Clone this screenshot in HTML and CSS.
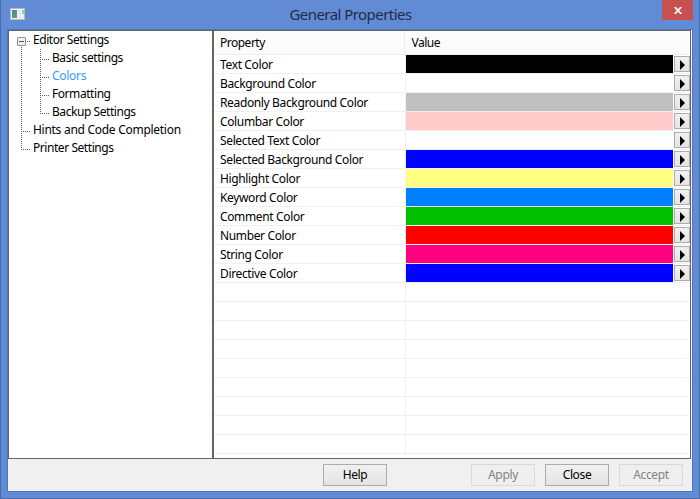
FILE: index.html
```html
<!DOCTYPE html>
<html lang="en">
<head>
<meta charset="utf-8">
<title>General Properties</title>
<link rel="stylesheet" href="styles.css">
</head>
<body>
<div class="window">
  <header class="titlebar">
    <svg class="app-icon" width="16" height="14" viewBox="0 0 16 14">
      <defs><linearGradient id="g" x1="0" y1="0" x2="1" y2="1"><stop offset="0" stop-color="#4a7fa8"/><stop offset="1" stop-color="#4bae78"/></linearGradient></defs>
      <rect x=".5" y=".5" width="14" height="11" fill="#f4f4f4" stroke="#b9b9b9"/>
      <rect x="2" y="2" width="5" height="8" fill="url(#g)"/>
      <rect x="8" y="2" width="3" height="8" fill="#e4e6e7"/>
      <rect x="12" y="2" width="2" height="4" fill="#8fc9b0"/>
      <rect x="12" y="6" width="2" height="4" fill="#e9eeee"/>
    </svg>
    <h1 class="title">General Properties</h1>
    <button class="close" aria-label="Close window"><svg width="8" height="7" viewBox="0 0 8 7"><path d="M.7 0L7.3 7M7.3 0L.7 7" stroke="#fff" stroke-width="1.8"/></svg></button>
  </header>
  <main class="client">
    <div class="panes">
      <nav class="tree">
        <svg class="tree-lines" width="60" height="130" viewBox="0 0 60 130">
          <g stroke="#606060" stroke-dasharray="1 1" fill="none">
            <path d="M12.5 16V119M31.5 18V83M18 10.5H22M14 100.5H22M14 118.5H22M33 28.5H41M33 46.5H41M33 64.5H41M33 82.5H41"/>
          </g>
          <rect x="8.5" y="6.5" width="8" height="8" rx=".5" fill="#f2f2f2" stroke="#919191"/>
          <path d="M10 10.5H15" stroke="#3f5497"/>
        </svg>
        <div class="node">Editor Settings</div>
        <div class="node child">Basic settings</div>
        <div class="node child selected">Colors</div>
        <div class="node child">Formatting</div>
        <div class="node child">Backup Settings</div>
        <div class="node wide">Hints and Code Completion</div>
        <div class="node">Printer Settings</div>
      </nav>
      <section class="grid">
        <div class="head"><div class="head-name">Property</div><div class="head-value">Value</div></div>
        <div class="rows" id="rows"></div>
      </section>
    </div>
    <footer class="footer">
      <button class="btn help">Help</button>
      <button class="btn" disabled>Apply</button>
      <button class="btn">Close</button>
      <button class="btn" disabled>Accept</button>
    </footer>
  </main>
</div>
<script src="script.js"></script>
</body>
</html>
```
FILE: styles.css
```css
* { box-sizing: border-box; }
body { margin: 0; font: 12px/18px "Noto Sans", "Open Sans", sans-serif; color: #000; letter-spacing: -0.36px; }
button { font: inherit; letter-spacing: inherit; margin: 0; padding: 0; border-radius: 0; }
.window { width: 700px; height: 499px; padding: 0 6px 6px; background: #628bd6; border: 1px solid #4a6cad; border-top: 0; }
.titlebar { position: relative; height: 29px; }
.app-icon { position: absolute; left: 3px; top: 8px; }
.title { margin: 0; padding: 4px 0 0 1px; text-align: center; font-size: 15px; line-height: 20px; font-weight: 400; color: #222c44; letter-spacing: -0.55px; }
.close { position: absolute; right: 0; top: 0; width: 31px; height: 20px; border: 0; background: #c75050; display: grid; place-items: center; }
.client { height: 463px; border: 1px solid #4f76bc; background: #f0f0f0; display: flex; flex-direction: column; }
.panes { height: 429px; display: flex; padding-right: 1px; }
.tree { position: relative; width: 205px; border: 1px solid #646464; background: #fff; }
.tree-lines { position: absolute; left: 0; top: 0; }
.node { height: 18px; padding-left: 24px; white-space: nowrap; letter-spacing: -0.44px; }
.child { padding-left: 43px; }
.wide { letter-spacing: -0.28px; }
.selected { color: #3399ff; letter-spacing: -0.3px; }
.grid { flex: 1; border: 1px solid #646464; background: #fff; display: flex; flex-direction: column; overflow: hidden; }
.head { flex: none; height: 24px; display: flex; background: #fcfcfc; border-bottom: 1px solid #e5effb; line-height: 24px; letter-spacing: -0.5px; }
.head-name { width: 191px; padding-left: 6px; border-right: 1px solid #e5effb; }
.head-value { padding-left: 6.5px; }
.rows { flex: 1; overflow: hidden; }
.row { height: 19px; display: flex; border-bottom: 1px solid #f0f0f0; line-height: 19px; }
.name { width: 192px; padding-left: 6px; border-right: 1px solid #f0f0f0; white-space: nowrap; }
.swatch { width: 267px; height: 18px; }
.arrow { width: 16px; height: 16px; margin: 1px 0 0 1px; border: 1px solid #acacac; background: linear-gradient(#f1f1f1, #e4e4e4); display: block; }
.arrow svg { display: block; }
.footer { flex: 1; display: flex; gap: 10px; padding: 5px 9px 0 315px; }
.btn { width: 64px; height: 22px; border: 1px solid #acacac; background: linear-gradient(#f1f1f1, #e4e4e4); color: #000; line-height: 20px; }
.btn:disabled { border-color: #d9d9d9; background: #efefef; color: #838383; }
.help { margin-right: 74px; }
```
FILE: script.js
```js
const rows = [
  ["Text Color", "#000000"], ["Background Color", "#ffffff"], ["Readonly Background Color", "#c0c0c0"],
  ["Columbar Color", "#ffcaca"], ["Selected Text Color", "#ffffff"], ["Selected Background Color", "#0000ff"],
  ["Highlight Color", "#ffff80"], ["Keyword Color", "#0080ff"], ["Comment Color", "#00c000"],
  ["Number Color", "#ff0000"], ["String Color", "#ff0080"], ["Directive Color", "#0000ff"]
];
const arrow = '<button class="arrow" aria-label="Choose color"><svg width="14" height="14" viewBox="0 0 14 14"><path d="M5 3L10 8L5 13Z"/></svg></button>';
let html = "";
for (let i = 0; i < 22; i++) {
  const r = rows[i];
  html += r
    ? `<div class="row"><div class="name">${r[0]}</div><div class="swatch" style="background:${r[1]}"></div>${arrow}</div>`
    : '<div class="row"><div class="name"></div></div>';
}
document.getElementById("rows").innerHTML = html;
```
